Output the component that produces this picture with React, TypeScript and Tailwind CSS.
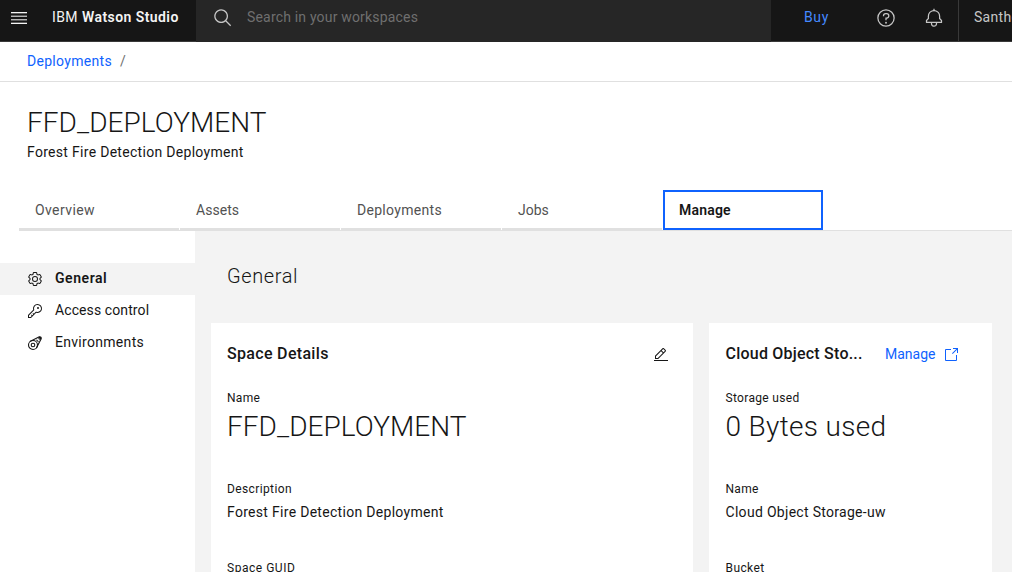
import type { ReactNode } from "react";

function Icon({ className, children }: { className: string; children: ReactNode }) {
  return (
    <svg viewBox="0 0 32 32" fill="currentColor" className={`shrink-0 ${className}`} aria-hidden="true">
      {children}
    </svg>
  );
}

function Header() {
  return (
    <header className="flex h-[42px] shrink-0 bg-[#161616] text-sm leading-5 text-[#c6c6c6]">
      <div className="flex w-[196px] shrink-0 border-b border-[#393939] pl-[11px]">
        <svg width="16" height="12" viewBox="0 0 16 12" className="mt-3" aria-hidden="true" shapeRendering="crispEdges">
          <path fill="#f4f4f4" d="M0 0h16v1H0zM0 11h16v1H0z" />
          <path fill="#b5b5b5" d="M0 4h16v1H0zM0 7h16v1H0z" />
          <path fill="#5c5c5c" d="M0 1h16v1H0zM0 3h16v1H0zM0 8h16v1H0zM0 10h16v1H0z" />
        </svg>
        <div className="ml-[25px] mt-[7px] flex gap-1 text-[#f4f4f4]">
          <span className="tracking-[0.4px]">IBM</span>
          <span className="font-semibold tracking-[0.43px]">Watson Studio</span>
        </div>
      </div>
      <div className="flex w-[575px] shrink-0 bg-[#262626] pl-[17px]">
        <Icon className="mt-[8px] size-5">
          <path d="M29,27.5859l-7.5521-7.5521a11.0177,11.0177,0,1,0-1.4141,1.4141L27.5859,29ZM4,13a9,9,0,1,1,9,9A9.01,9.01,0,0,1,4,13Z" />
        </Icon>
        <span className="ml-[14px] mt-[7px] tracking-[0.18px] text-[#6f6f6f]">Search in your workspaces</span>
      </div>
      <div className="flex min-w-0 grow border-b border-[#393939]">
        <span className="ml-[33px] mt-[7px] w-[72px] shrink-0 tracking-[0.6px] text-[#4589ff]">Buy</span>
        <Icon className="mt-[8px] size-5">
          <path d="M16,2A14,14,0,1,0,30,16,14,14,0,0,0,16,2Zm0,26A12,12,0,1,1,28,16,12,12,0,0,1,16,28Z" />
          <circle cx="16" cy="23.5" r="1.5" />
          <path d="M17,8H15.5A4.49,4.49,0,0,0,11,12.5V13h2v-.5A2.5,2.5,0,0,1,15.5,10H17a2.5,2.5,0,0,1,0,5H15v4.5h2V17a4.5,4.5,0,0,0,0-9Z" />
        </Icon>
        <Icon className="ml-7 mt-[8px] size-5">
          <path d="M28.7071,19.293,26,16.5859V13a10.0136,10.0136,0,0,0-9-9.9492V1H15V3.0508A10.0136,10.0136,0,0,0,6,13v3.5859L3.2929,19.293A1,1,0,0,0,3,20v3a1,1,0,0,0,1,1h7v.7768a5.152,5.152,0,0,0,4.5,5.1987A5.0057,5.0057,0,0,0,21,25V24h7a1,1,0,0,0,1-1V20A1,1,0,0,0,28.7071,19.293ZM19,25a3,3,0,0,1-6,0V24h6Zm8-3H5V20.4141L7.707,17.707A1,1,0,0,0,8,17V13a8,8,0,0,1,16,0v4a1,1,0,0,0,.293.707L27,20.4141Z" />
        </Icon>
        <div className="ml-[14px] min-w-0 grow overflow-hidden border-l border-[#393939] pl-[15px] pt-[7px]">
          <span className="whitespace-nowrap tracking-[0.3px]">Santhosh</span>
        </div>
      </div>
    </header>
  );
}

const tabs = [
  { label: "Overview", spacing: "tracking-[0.4px]" },
  { label: "Assets", spacing: "tracking-[0.05px]" },
  { label: "Deployments", spacing: "tracking-[0.3px]" },
  { label: "Jobs", spacing: "" },
];

function Tabs() {
  return (
    <nav className="mt-[27px] ml-[19px] flex h-[41px] shrink-0 gap-px border-b border-[#e0e0e0] text-sm leading-5">
      {tabs.map((tab) => (
        <div key={tab.label} className={`w-40 border-b-2 border-[#e0e0e0] pl-4 pt-[10px] text-[#525252] ${tab.spacing}`}>
          {tab.label}
        </div>
      ))}
      <div className="w-40 border-2 border-[#0f62fe] pl-[14px] pt-2 font-semibold tracking-[0.2px]">Manage</div>
    </nav>
  );
}

function Sidebar() {
  return (
    <aside className="w-[195px] shrink-0 pt-8 text-sm leading-5">
      <div className="flex h-8 bg-[#f3f3f3] pl-[27px]">
        <Icon className="mt-2 size-4">
          <path d="M27,16.76c0-.25,0-.5,0-.76s0-.51,0-.77l1.92-1.68A2,2,0,0,0,29.3,11L26.94,7a2,2,0,0,0-1.73-1,2,2,0,0,0-.64.1l-2.43.82a11.35,11.35,0,0,0-1.31-.75l-.51-2.52a2,2,0,0,0-2-1.61H13.64a2,2,0,0,0-2,1.61l-.51,2.52a11.48,11.48,0,0,0-1.32.75L7.43,6.06A2,2,0,0,0,6.79,6,2,2,0,0,0,5.06,7L2.7,11a2,2,0,0,0,.41,2.51L5,15.24c0,.25,0,.5,0,.76s0,.51,0,.77L3.11,18.45A2,2,0,0,0,2.7,21L5.06,25a2,2,0,0,0,1.73,1,2,2,0,0,0,.64-.1l2.43-.82a11.35,11.35,0,0,0,1.31.75l.51,2.52a2,2,0,0,0,2,1.61h4.72a2,2,0,0,0,2-1.61l.51-2.52a11.48,11.48,0,0,0,1.32-.75l2.42.82a2,2,0,0,0,.64.1,2,2,0,0,0,1.73-1L29.3,21a2,2,0,0,0-.41-2.51ZM25.21,24l-3.43-1.16a8.86,8.86,0,0,1-2.71,1.57L18.36,28H13.64l-.71-3.55a9.36,9.36,0,0,1-2.7-1.57L6.79,24,4.43,20l2.72-2.4a8.9,8.9,0,0,1,0-3.13L4.43,12,6.79,8l3.43,1.16a8.86,8.86,0,0,1,2.71-1.57L13.64,4h4.72l.71,3.55a9.36,9.36,0,0,1,2.7,1.57L25.21,8,27.57,12l-2.72,2.4a8.9,8.9,0,0,1,0,3.13L27.57,20Z" />
          <path d="M16,22a6,6,0,1,1,6-6A5.94,5.94,0,0,1,16,22Zm0-10a3.91,3.91,0,0,0-4,4,3.91,3.91,0,0,0,4,4,3.91,3.91,0,0,0,4-4A3.91,3.91,0,0,0,16,12Z" />
        </Icon>
        <span className="ml-3 mt-[5px] font-semibold tracking-[0.55px]">General</span>
      </div>
      <div className="flex h-8 pl-[27px]">
        <Icon className="mt-2 size-4">
          <path d="M21,2a8.9977,8.9977,0,0,0-8.6119,11.6118L2,24v6H8L18.3881,19.6118A9,9,0,1,0,21,2Zm0,16a7.0125,7.0125,0,0,1-2.0322-.3022L17.821,17.35l-.8472.8472-3.1811,3.1812L12.4141,20,11,21.4141l1.3787,1.3786-1.5859,1.586L9.4141,23,8,24.4141l1.3787,1.3786L7.1716,28H4V24.8284l9.8023-9.8023.8472-.8474-.3473-1.1467A7,7,0,1,1,21,18Z" />
          <circle cx="22" cy="10" r="2" />
        </Icon>
        <span className="ml-3 mt-[5px] tracking-[0.1px]">Access control</span>
      </div>
      <div className="flex h-8 pl-[27px]">
        <Icon className="mt-2 size-4">
          <g fill="none" stroke="currentColor" strokeWidth="2.2">
            <circle cx="12" cy="20" r="9" />
            <circle cx="12" cy="20" r="3.6" />
            <path d="M6 13.2 24.6 3.6a3 3 0 0 1 3.8 3.8L18.8 26" />
            <path d="M19 9.5c1.2 2 2 2.600 4 4" />
            <circle cx="25.500" cy="6.500" r="1.800" />
          </g>
        </Icon>
        <span className="ml-3 mt-[5px] tracking-[0.3px]">Environments</span>
      </div>
    </aside>
  );
}

function SpaceDetails() {
  return (
    <section className="w-[482px] shrink-0 bg-white px-4 pt-5">
      <div className="flex h-[46px] justify-between">
        <h3 className="text-base leading-[22px] font-medium tracking-[0.32px]">Space Details</h3>
        <Icon className="mr-2 mt-1 size-4">
          <path d="M2 26H30V28H2zM25.4 9c.8-.8.8-2 0-2.8l-3.6-3.6c-.8-.8-2-.8-2.8 0l-15 15V24h6.4L25.4 9zM20.4 4L24 7.6l-3 3L17.4 7 20.4 4zM6 22v-3.6l10-10 3.6 3.6-10 10H6z" />
        </Icon>
      </div>
      <div className="text-xs leading-[18px] tracking-[0.3px]">Name</div>
      <div className="mt-0.5 text-[28px] leading-9 font-light tracking-[0.05px]">FFD_DEPLOYMENT</div>
      <div className="mt-[35px] text-xs leading-[18px] tracking-[0.38px]">Description</div>
      <div className="mt-1 text-sm leading-5 tracking-[0.3px]">Forest Fire Detection Deployment</div>
      <div className="mt-[37px] text-xs leading-[18px] tracking-[0.52px]">Space GUID</div>
    </section>
  );
}

function ObjectStorage() {
  return (
    <section className="w-[283px] shrink-0 bg-white pl-[16.5px] pt-5">
      <div className="flex h-[46px]">
        <h3 className="w-[159.5px] text-base leading-[22px] font-medium tracking-[0.22px]">Cloud Object Sto...</h3>
        <a className="flex text-sm leading-5 text-[#0f62fe]">
          <span className="mt-px w-[58px]">Manage</span>
          <Icon className="mt-1 size-4">
            <path d="M26,28H6a2.0027,2.0027,0,0,1-2-2V6A2.0027,2.0027,0,0,1,6,4H16V6H6V26H26V16h2V26A2.0027,2.0027,0,0,1,26,28Z" />
            <path d="M20 2V4H26.586L18 12.586 19.414 14 28 5.414V12H30V2Z" />
          </Icon>
        </a>
      </div>
      <div className="text-xs leading-[18px] tracking-[0.32px]">Storage used</div>
      <div className="mt-0.5 text-[28px] leading-9 font-light tracking-[0.33px]">0 Bytes used</div>
      <div className="mt-[35px] text-xs leading-[18px] tracking-[0.3px]">Name</div>
      <div className="mt-1 text-sm leading-5 tracking-[0.3px]">Cloud Object Storage-uw</div>
      <div className="mt-[37px] text-xs leading-[18px] tracking-[0.4px]">Bucket</div>
    </section>
  );
}

export default function App() {
  return (
    <div className="flex h-[572px] w-[1012px] flex-col overflow-hidden bg-white font-['Roboto',sans-serif] text-[#161616]">
      <Header />
      <div className="h-10 shrink-0 border-b border-[#e0e0e0] pl-[27px] pt-[9px] text-sm leading-5">
        <a className="tracking-[0.3px] text-[#0f62fe]">Deployments</a>
        <span className="ml-2 text-[#6f6f6f]">/</span>
      </div>
      <div className="shrink-0 pl-[27px] pt-[23px]">
        <h1 className="text-[28px] leading-9 font-light tracking-[0.05px]">FFD_DEPLOYMENT</h1>
        <p className="mt-px h-[21px] text-sm leading-5 tracking-[0.3px]">Forest Fire Detection Deployment</p>
      </div>
      <Tabs />
      <div className="flex min-h-0 grow">
        <Sidebar />
        <main className="min-w-0 grow bg-[#f3f3f3] px-4 pt-8">
          <h2 className="h-[60px] pl-4 text-xl leading-[26px] font-light tracking-[0.6px]">General</h2>
          <div className="flex h-[249px] gap-4">
            <SpaceDetails />
            <ObjectStorage />
          </div>
        </main>
      </div>
    </div>
  );
}
